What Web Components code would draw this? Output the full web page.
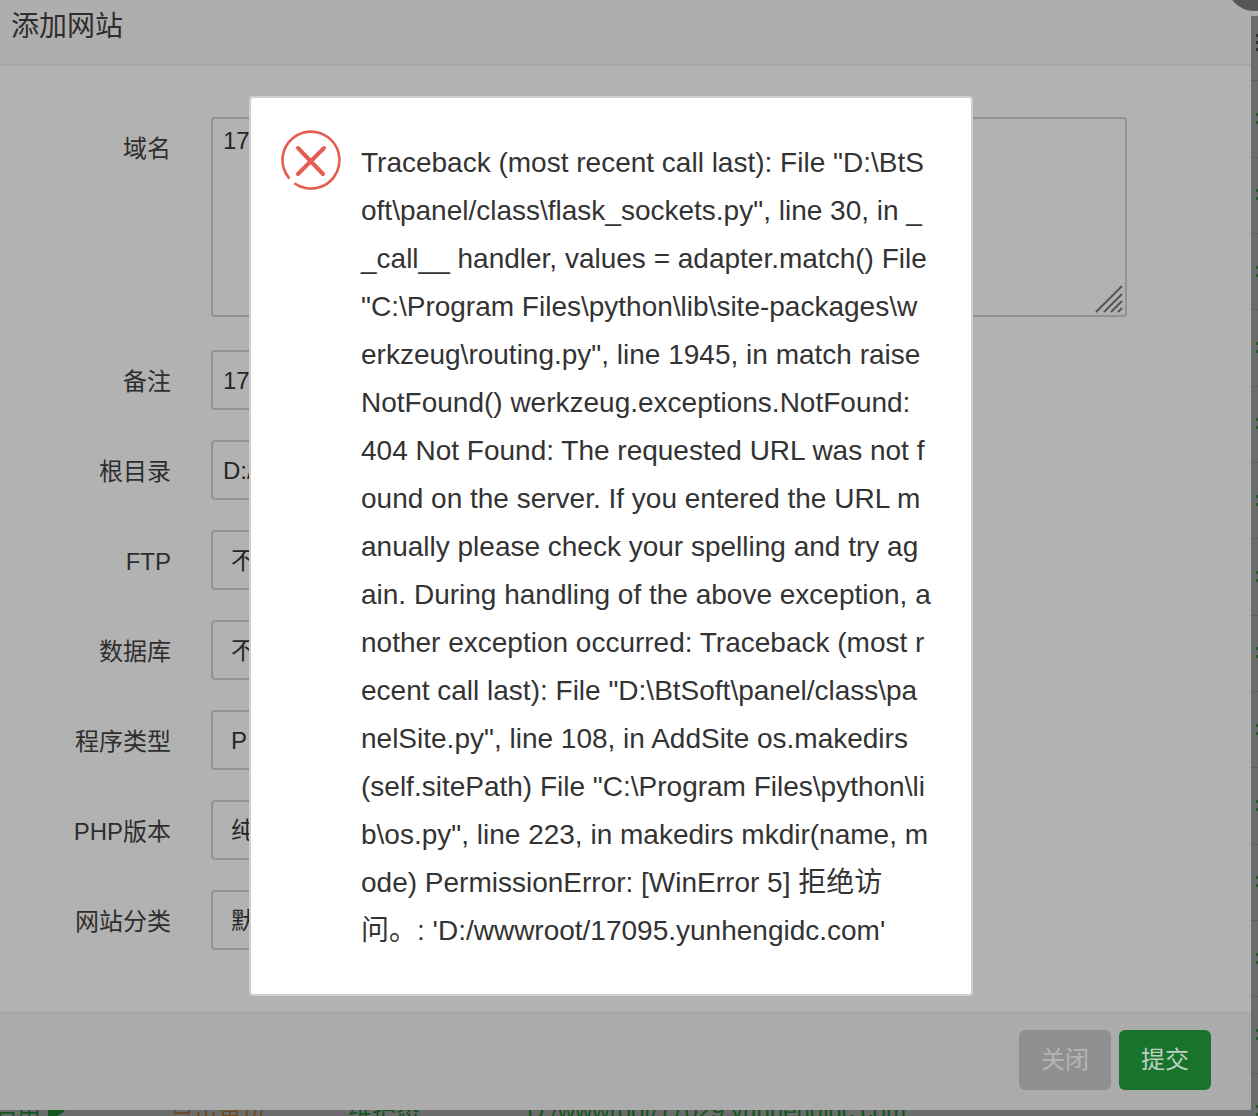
<!DOCTYPE html>
<html>
<head>
<meta charset="utf-8">
<title>添加网站</title>
<style>
  html, body { margin: 0; height: 100%; overflow: hidden; background: #666; }
</style>
</head>
<body>
<site-table></site-table>
<add-site-dialog>
  <form-row label="域名" kind="area" value="17"></form-row>
  <form-row label="备注" value="17"></form-row>
  <form-row label="根目录" value="D:/"></form-row>
  <form-row label="FTP" value="不" indent></form-row>
  <form-row label="数据库" value="不" indent></form-row>
  <form-row label="程序类型" value="P" indent></form-row>
  <form-row label="PHP版本" value="纯" indent></form-row>
  <form-row label="网站分类" value="默" indent></form-row>
</add-site-dialog>
<error-box>
  Traceback (most recent call last): File "D:\BtS<br>
  oft\panel/class\flask_sockets.py", line 30, in _<br>
  _call__ handler, values = adapter.match() File<br>
  "C:\Program Files\python\lib\site-packages\w<br>
  erkzeug\routing.py", line 1945, in match raise<br>
  NotFound() werkzeug.exceptions.NotFound:<br>
  404 Not Found: The requested URL was not f<br>
  ound on the server. If you entered the URL m<br>
  anually please check your spelling and try ag<br>
  ain. During handling of the above exception, a<br>
  nother exception occurred: Traceback (most r<br>
  ecent call last): File "D:\BtSoft\panel/class\pa<br>
  nelSite.py", line 108, in AddSite os.makedirs<br>
  (self.sitePath) File "C:\Program Files\python\li<br>
  b\os.py", line 223, in makedirs mkdir(name, m<br>
  ode) PermissionError: [WinError 5] 拒绝访<br>
  问。: 'D:/wwwroot/17095.yunhengidc.com'
</error-box>

<script>
const FONT = '"Liberation Sans", "Noto Sans CJK SC", sans-serif'

// the site list behind the dialog, only its edges show
customElements.define('site-table', class extends HTMLElement {
  constructor () {
    super()
    let rows = ''
    for (let i = 0; i < 15; i++) {
      const last = i === 14
      rows += `
      <div class="row">
        <span class="state">${last ? '启用<i></i>' : ''}</span>
        <span class="backup">${last ? '点击备份' : ''}</span>
        <span>${last ? '维护态' : ''}</span>
        <span>${last ? 'D:/wwwroot/17029.yunhengidc.com' : ''}</span>
        <span class="action ${i === 0 ? 'head' : ''}"></span>
      </div>`
    }
    this.attachShadow({ mode: 'open' }).innerHTML = `
      <style>
        :host { display: block; height: 1116px; overflow: hidden; background: #6c6c6c; box-sizing: border-box; padding-top: 5px; font: 24px ${FONT}; color: #14561f; }
        .row { display: grid; grid-template-columns: 170px 178px 179px 729px 2px; box-sizing: border-box; height: 76.35px; line-height: 74px; border-bottom: 1px solid #5e5e5e; white-space: nowrap; overflow: hidden; }
        .state { margin-left: -7px; display: flex; align-items: center; }
        .state i { margin-left: 7px; border-left: 17px solid #14561f; border-top: 11px solid transparent; border-bottom: 11px solid transparent; }
        .backup { color: #6e4a1a; }
        .action { align-self: center; height: 14px; margin-top: 2px; background: repeating-linear-gradient(#2a5a34 0 3px, transparent 3px 8px); }
        .action.head { height: 20px; background: repeating-linear-gradient(#333 0 3px, transparent 3px 7px); }
      </style>
      ${rows}`
  }
})

customElements.define('add-site-dialog', class extends HTMLElement {
  constructor () {
    super()
    this.attachShadow({ mode: 'open' }).innerHTML = `
      <style>
        :host { position: absolute; left: 0; top: 0; width: 1251px; height: 1110px; background: #b2b2b2; display: flex; flex-direction: column; font-family: ${FONT}; }
        header { height: 66px; box-sizing: border-box; background: #aeaeae; border-bottom: 2px solid #a6a6a6; padding-left: 11px; font-size: 28px; line-height: 54px; color: #2e2e2e; }
        .body { flex: 1; display: flex; flex-direction: column; gap: 30px; padding-top: 51px; }
        footer { height: 98px; box-sizing: border-box; background: #ababab; border-top: 2px solid #a6a6a6; display: flex; justify-content: flex-end; gap: 8px; padding: 16px 40px 0 0; }
        button { width: 92px; height: 60px; border: 0; border-radius: 6px; font: 24px ${FONT}; padding: 0 0 6px; }
        .close { background: #909090; color: #b5b5b5; }
        .submit { background: #18742c; color: #bcd0c0; }
        .dot { position: absolute; left: 1222px; top: -48px; width: 54px; height: 54px; border-radius: 50%; background: #565656; border: 5px solid #aeaeae; }
      </style>
      <header>添加网站</header>
      <div class="body"><slot></slot></div>
      <footer><button class="close">关闭</button><button class="submit">提交</button></footer>
      <div class="dot"></div>`
  }
})

customElements.define('form-row', class extends HTMLElement {
  constructor () {
    super()
    const area = this.getAttribute('kind') === 'area'
    const indent = this.hasAttribute('indent')
    this.attachShadow({ mode: 'open' }).innerHTML = `
      <style>
        :host { display: flex; align-items: flex-start; gap: 40px; height: ${area ? 203 : 60}px; color: #2e2e2e; font-size: 24px; }
        label { width: 171px; text-align: right; line-height: 64px; white-space: nowrap; }
        .field { box-sizing: border-box; width: ${area ? 916 : 500}px; height: ${area ? 200 : 60}px; border: 2px solid #929292; border-radius: 4px; padding: ${area ? '4px' : '0'} 10px 0 ${indent ? 18 : 10}px; line-height: ${area ? 36 : 58}px; color: #262626; position: relative; }
        svg { position: absolute; right: 2px; bottom: 2px; }
      </style>
      <label>${this.getAttribute('label')}</label>
      <div class="field">${this.getAttribute('value')}
        ${area ? `<svg width="28" height="28" viewBox="0 0 28 28" fill="none" stroke="#555" stroke-width="2"><path d="M1 27 27 1M9 27 27 9M16 27 27 16M23 27 27 23"/></svg>` : ''}
      </div>`
  }
})

customElements.define('error-box', class extends HTMLElement {
  constructor () {
    super()
    this.attachShadow({ mode: 'open' }).innerHTML = `
      <style>
        :host { position: absolute; left: 249px; top: 96px; width: 724px; height: 900px; box-sizing: border-box; background: #fff; border: 2px solid #cfcfcf; border-radius: 4px; display: flex; font-family: ${FONT}; }
        svg { flex: none; margin: 30.5px 0 0 29px; }
        .msg { margin: 41px 0 0 19px; font-size: 28px; line-height: 48px; color: #333; white-space: nowrap; }
      </style>
      <svg width="62" height="62" viewBox="0 0 62 62" fill="none" stroke="#e35d50">
        <path stroke-width="2.6" d="M9.4 49.7A28.5 28.5 0 1 1 14.3 54.2"/>
        <path stroke-width="4" stroke-linecap="round" d="M18 19 43 45M44 19 18 45"/>
      </svg>
      <div class="msg"><slot></slot></div>`
  }
})
</script>
</body>
</html>
